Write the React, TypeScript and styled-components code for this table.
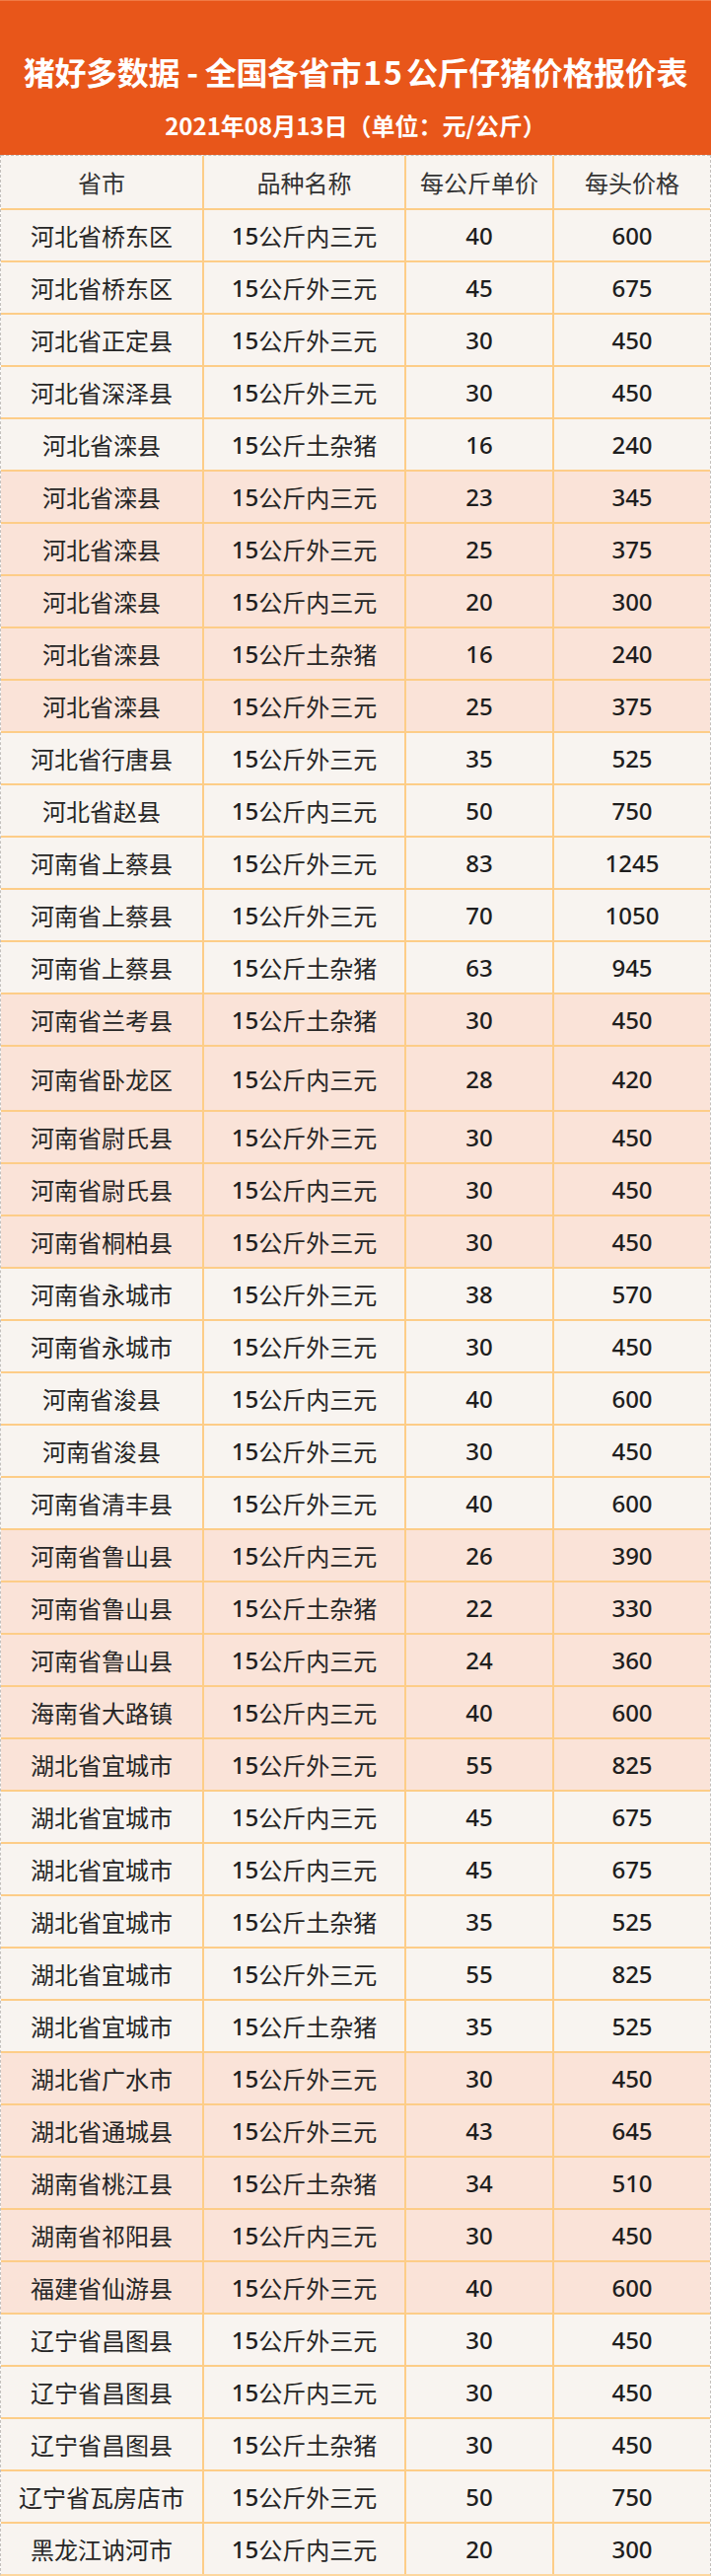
import React from "react";
import styled, { createGlobalStyle } from "styled-components";

const Global = createGlobalStyle`
  html, body { margin: 0; padding: 0; background: #ffffff; }
  body { font-family: "Noto Sans CJK SC", "Noto Sans", sans-serif; }
`;

const Page = styled.div`
  width: 721px;
  display: flex;
  flex-direction: column;
`;

const Banner = styled.header`
  height: 157px;
  box-sizing: border-box;
  background: #e8561a;
  border-top: 1px solid #f07a45;
  display: flex;
  flex-direction: column;
  align-items: center;
  padding-top: 51px;
  color: #ffffff;
  font-weight: 700;
`;

const Title = styled.h1`
  margin: 0;
  font-size: 32px;
  line-height: 40px;
  font-weight: 700;
  letter-spacing: -0.3px;
  white-space: nowrap;
`;

const TitleDigits = styled.span`
  letter-spacing: 2px;
  margin: 0 2px;
`;

const Subtitle = styled.div`
  margin-top: 20px;
  font-size: 24px;
  line-height: 30px;
  font-weight: 700;
  white-space: nowrap;
`;

const Table = styled.div`
  display: flex;
  flex-direction: column;
  border-left: 1px dashed #c4c0bc;
  border-right: 1px dashed #c4c0bc;
  border-bottom: 2px solid #fdd79f;
`;

const Row = styled.div<{ $pink?: boolean; $tall?: boolean; $head?: boolean }>`
  display: grid;
  grid-template-columns: 204px 205px 150px 1fr;
  height: ${(p) => (p.$head ? 53 : p.$tall ? 64 : 51)}px;
  border-top: ${(p) => (p.$head ? "1px dashed #c4c0bc" : "2px solid #fdcd88")};
  background: ${(p) => (p.$pink ? "#fae3d8" : "#f8f4f0")};
`;

const Cell = styled.div`
  display: flex;
  align-items: center;
  justify-content: center;
  font-size: 24px;
  color: #262626;
  white-space: nowrap;
  & + & {
    border-left: 2px solid #fdcd88;
  }
`;

const HeadCell = styled(Cell)`
  color: #333333;
`;

const Num = styled.span`
  font-family: "Noto Sans", "Noto Sans CJK SC", sans-serif;
  font-weight: 500;
  color: #1e1e1e;
`;

type Item = [string, string, number, number];

const data: Item[] = [
  ["河北省桥东区", "内三元", 40, 600],
  ["河北省桥东区", "外三元", 45, 675],
  ["河北省正定县", "外三元", 30, 450],
  ["河北省深泽县", "外三元", 30, 450],
  ["河北省滦县", "土杂猪", 16, 240],
  ["河北省滦县", "内三元", 23, 345],
  ["河北省滦县", "外三元", 25, 375],
  ["河北省滦县", "内三元", 20, 300],
  ["河北省滦县", "土杂猪", 16, 240],
  ["河北省滦县", "外三元", 25, 375],
  ["河北省行唐县", "外三元", 35, 525],
  ["河北省赵县", "内三元", 50, 750],
  ["河南省上蔡县", "外三元", 83, 1245],
  ["河南省上蔡县", "外三元", 70, 1050],
  ["河南省上蔡县", "土杂猪", 63, 945],
  ["河南省兰考县", "土杂猪", 30, 450],
  ["河南省卧龙区", "内三元", 28, 420],
  ["河南省尉氏县", "外三元", 30, 450],
  ["河南省尉氏县", "内三元", 30, 450],
  ["河南省桐柏县", "外三元", 30, 450],
  ["河南省永城市", "外三元", 38, 570],
  ["河南省永城市", "外三元", 30, 450],
  ["河南省浚县", "内三元", 40, 600],
  ["河南省浚县", "外三元", 30, 450],
  ["河南省清丰县", "外三元", 40, 600],
  ["河南省鲁山县", "内三元", 26, 390],
  ["河南省鲁山县", "土杂猪", 22, 330],
  ["河南省鲁山县", "内三元", 24, 360],
  ["海南省大路镇", "内三元", 40, 600],
  ["湖北省宜城市", "外三元", 55, 825],
  ["湖北省宜城市", "内三元", 45, 675],
  ["湖北省宜城市", "内三元", 45, 675],
  ["湖北省宜城市", "土杂猪", 35, 525],
  ["湖北省宜城市", "外三元", 55, 825],
  ["湖北省宜城市", "土杂猪", 35, 525],
  ["湖北省广水市", "外三元", 30, 450],
  ["湖北省通城县", "外三元", 43, 645],
  ["湖南省桃江县", "土杂猪", 34, 510],
  ["湖南省祁阳县", "内三元", 30, 450],
  ["福建省仙游县", "外三元", 40, 600],
  ["辽宁省昌图县", "外三元", 30, 450],
  ["辽宁省昌图县", "内三元", 30, 450],
  ["辽宁省昌图县", "土杂猪", 30, 450],
  ["辽宁省瓦房店市", "外三元", 50, 750],
  ["黑龙江讷河市", "内三元", 20, 300],
];

export default function App() {
  return (
    <Page>
      <Global />
      <Banner>
        <Title>
          猪好多数据 - 全国各省市<TitleDigits>15</TitleDigits>公斤仔猪价格报价表
        </Title>
        <Subtitle>2021年08月13日（单位：元/公斤）</Subtitle>
      </Banner>
      <Table>
        <Row $head>
          <HeadCell>省市</HeadCell>
          <HeadCell>品种名称</HeadCell>
          <HeadCell>每公斤单价</HeadCell>
          <HeadCell>每头价格</HeadCell>
        </Row>
        {data.map(([place, kind, unit, head], i) => (
          <Row key={i} $pink={Math.floor(i / 5) % 2 === 1} $tall={i === 16}>
            <Cell>{place}</Cell>
            <Cell>
              <Num>15</Num>公斤{kind}
            </Cell>
            <Cell>
              <Num>{unit}</Num>
            </Cell>
            <Cell>
              <Num>{head}</Num>
            </Cell>
          </Row>
        ))}
      </Table>
    </Page>
  );
}
